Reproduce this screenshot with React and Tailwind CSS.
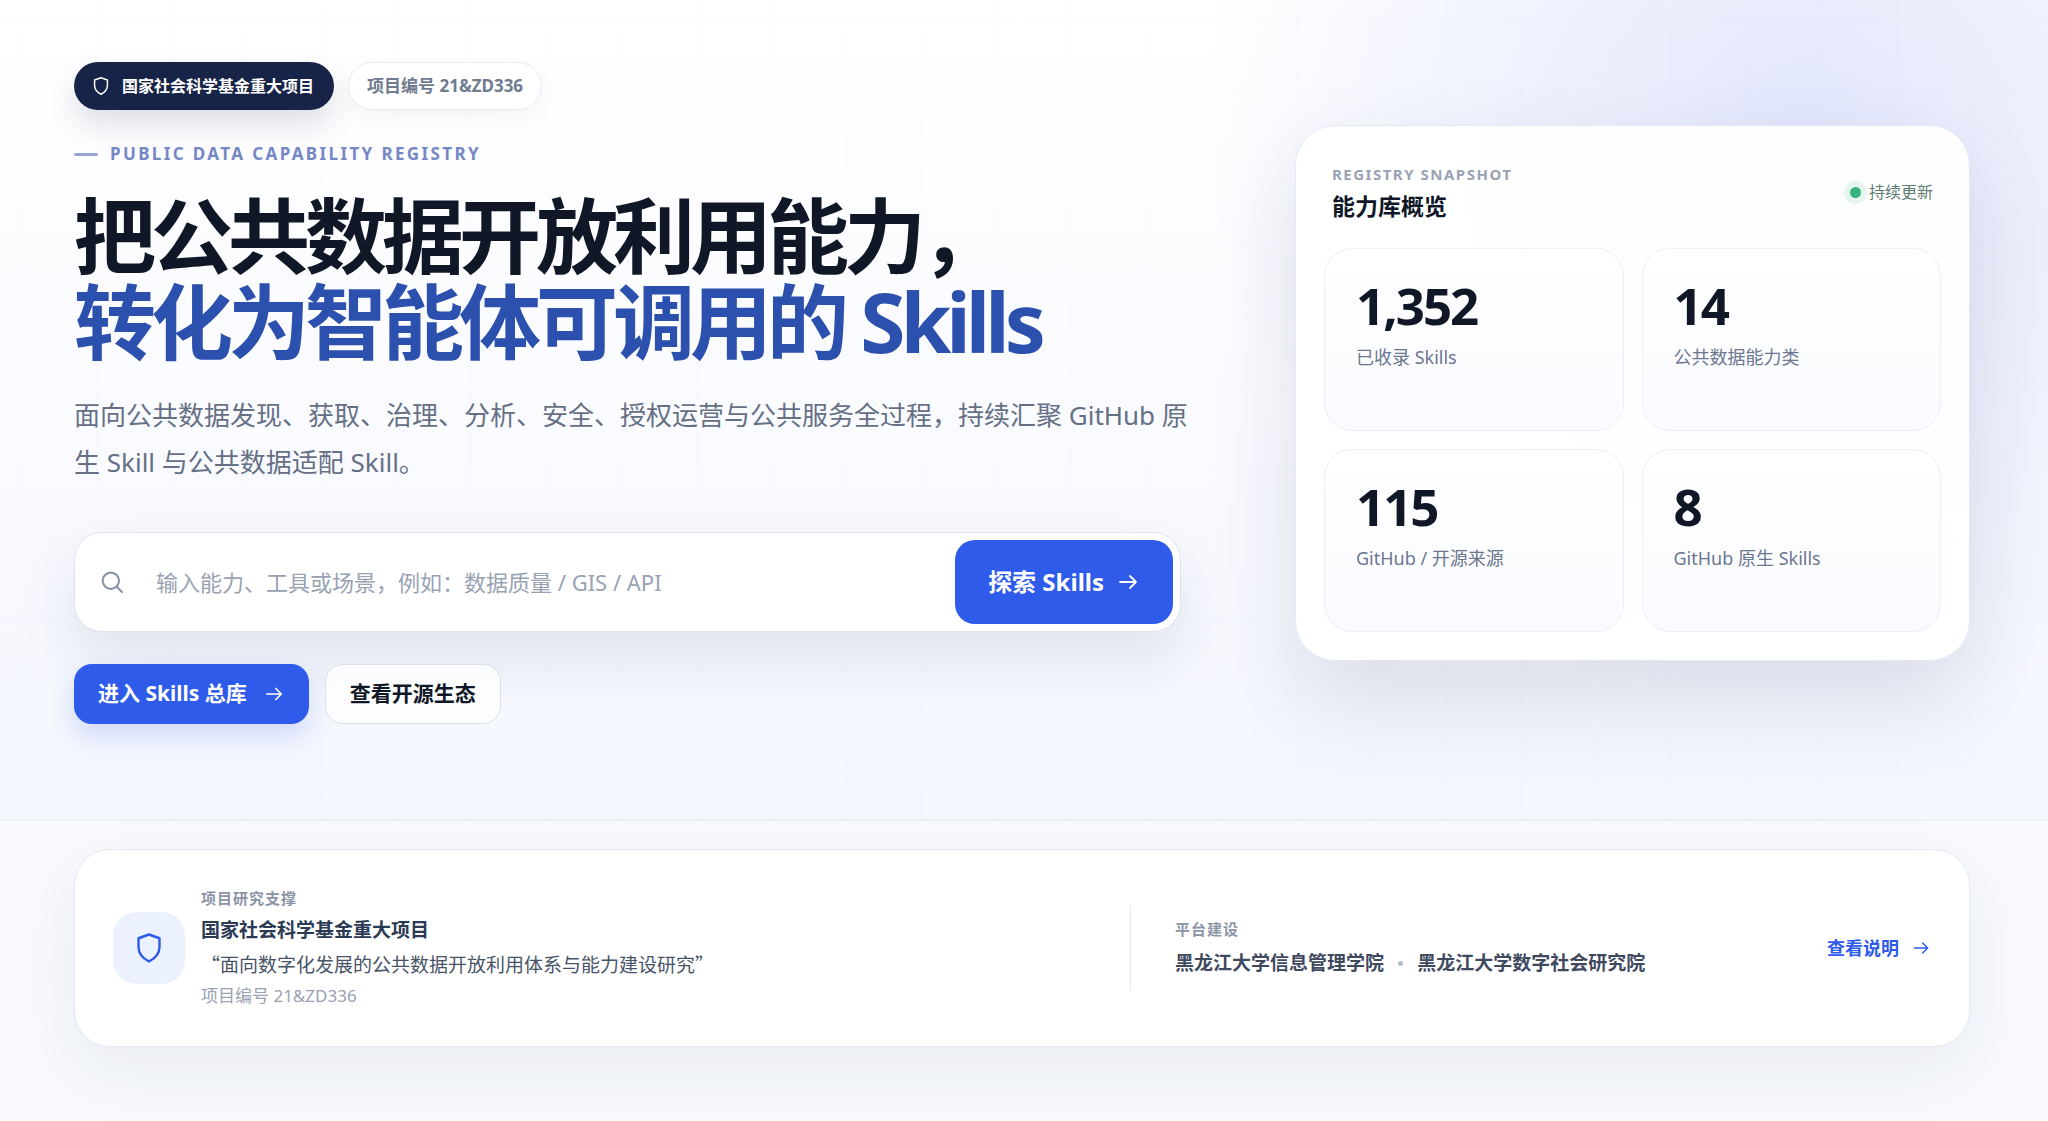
import React, { useState } from 'react';

const stats = [
  { value: '1,352', label: '已收录 Skills' },
  { value: '14', label: '公共数据能力类' },
  { value: '115', label: 'GitHub / 开源来源' },
  { value: '8', label: 'GitHub 原生 Skills' },
];

const ShieldIcon = ({ className }) => (
  <svg viewBox="0 0 24 24" fill="none" stroke="currentColor" strokeWidth="1.6" strokeLinecap="round" strokeLinejoin="round" className={className} aria-hidden="true">
    <path d="M12 3 19 5.5v5.7c0 4.6-2.8 7.7-7 9.8-4.2-2.1-7-5.2-7-9.8V5.5L12 3Z" />
  </svg>
);

const ArrowIcon = ({ className }) => (
  <svg viewBox="0 0 24 24" fill="none" stroke="currentColor" strokeWidth="1.8" strokeLinecap="round" strokeLinejoin="round" className={className} aria-hidden="true">
    <path d="M4 12h16M14 6l6 6-6 6" />
  </svg>
);

const SearchIcon = ({ className }) => (
  <svg viewBox="0 0 24 24" fill="none" stroke="currentColor" strokeWidth="1.8" strokeLinecap="round" className={className} aria-hidden="true">
    <circle cx="11" cy="11" r="7" />
    <path d="m16.5 16.5 4 4" />
  </svg>
);

const Hero = () => {
  const [query, setQuery] = useState('');

  return (
    <section className="border-b border-[#e6eaf2] bg-[linear-gradient(rgba(60,90,170,0.012)_1px,transparent_1px),linear-gradient(90deg,rgba(60,90,170,0.012)_1px,transparent_1px),radial-gradient(circle_at_88%_14%,rgba(79,110,230,0.16),transparent_31%),linear-gradient(180deg,#ffffff_0%,#fafbff_50%,#f3f6fd_100%)] bg-[size:75px_75px,75px_75px,auto,auto] bg-[position:21px_16px,21px_16px,0_0,0_0] pt-[62px] pr-[78px] pb-24 pl-[74px]">
      <div className="grid grid-cols-[minmax(0,1.64fr)_minmax(0,1fr)] items-center gap-[114px]">
        <div>
          <div className="flex items-center gap-[14px]">
            <span className="flex h-12 items-center gap-[10px] rounded-full bg-[#172447] pr-5 pl-4 text-base font-bold text-white shadow-[0_14px_30px_rgba(23,36,71,0.14)]">
              <ShieldIcon className="size-[22px]" />
              国家社会科学基金重大项目
            </span>
            <span className="flex h-12 items-center rounded-full border border-[#e6eaf5] bg-white px-[18px] text-[17px] font-bold text-[#6f7b90] shadow-[0_8px_20px_rgba(23,36,71,0.04)]">
              项目编号 21&amp;ZD336
            </span>
          </div>

          <div className="mt-8 flex items-center gap-3 text-[17px] leading-6 font-bold tracking-[0.14em] text-[#7587c5]">
            <span className="h-[3px] w-6 rounded-full bg-[#95a5d6]"></span>
            PUBLIC DATA CAPABILITY REGISTRY
          </div>

          <h1 className="mt-[26px] text-[82px] leading-[86px] font-bold tracking-[-5px] text-[#101828]">
            把公共数据开放利用能力，
            <span className="block text-[#2c50ae]">转化为智能体可调用的 Skills</span>
          </h1>

          <p className="-mr-4 mt-7 text-[26px] leading-[47px] text-[#667085]">
            面向公共数据发现、获取、治理、分析、安全、授权运营与公共服务全过程，持续汇聚 GitHub 原生 Skill 与公共数据适配 Skill。
          </p>

          <form
            onSubmit={(e) => e.preventDefault()}
            className="mt-[46px] flex items-center rounded-[28px] border border-[#dde4f0] bg-white p-[7px] shadow-[0_26px_60px_rgba(23,36,71,0.10)]"
          >
            <label htmlFor="skill-search" aria-label="搜索 Skills" className="pl-4 text-[#8a94a6]">
              <SearchIcon className="size-7" />
            </label>
            <input
              id="skill-search"
              type="text"
              value={query}
              onChange={(e) => setQuery(e.target.value)}
              placeholder="输入能力、工具或场景，例如：数据质量 / GIS / API"
              className="min-w-0 flex-1 bg-transparent px-[30px] text-[22px] text-[#101828] outline-none placeholder:text-[#98a2b3]"
            />
            <button type="submit" className="flex h-[84px] items-center gap-3 rounded-[20px] bg-[#2e5bea] px-[33px] text-2xl font-bold text-white">
              探索 Skills
              <ArrowIcon className="size-6" />
            </button>
          </form>

          <div className="mt-8 flex gap-4">
            <a href="#skills" className="flex h-[60px] items-center gap-4 rounded-[18px] bg-[#2e5bea] px-6 text-[21px] font-bold text-white shadow-[0_12px_26px_rgba(46,91,234,0.18)]">
              进入 Skills 总库
              <ArrowIcon className="size-[22px]" />
            </a>
            <a href="#ecosystem" className="flex h-[60px] items-center rounded-[18px] border border-[#d9e0ec] bg-white/80 px-6 text-[21px] font-bold text-[#101828]">
              查看开源生态
            </a>
          </div>
        </div>

        <aside className="rounded-[40px] border border-[#e3e9f8] bg-white/92 p-7 shadow-[0_40px_90px_rgba(23,36,71,0.12)]">
          <div className="flex items-center justify-between px-2 pt-2 pb-[26px]">
            <div>
              <div className="text-[15px] leading-6 font-bold tracking-widest text-[#98a2b3]">REGISTRY SNAPSHOT</div>
              <h2 className="mt-1 text-[23px] leading-8 font-bold text-[#101828]">能力库概览</h2>
            </div>
            <div className="flex items-center gap-2 text-base text-[#5d7c70]">
              <span className="size-[11px] rounded-full bg-[#37b27c] ring-6 ring-[#e6f6ee]"></span>
              持续更新
            </div>
          </div>
          <div className="grid grid-cols-2 gap-[18px]">
            {stats.map((item) => (
              <div key={item.label} className="h-[183px] rounded-[28px] border border-[#ebeff7] bg-linear-to-b from-white to-[#fafbff] px-[31px] pt-[26px]">
                <div className="text-[51px] leading-[60px] font-bold tracking-[-2px] text-[#101828]">{item.value}</div>
                <div className="mt-2 text-lg leading-7 text-[#6b7690]">{item.label}</div>
              </div>
            ))}
          </div>
        </aside>
      </div>
    </section>
  );
};

const Support = () => (
  <section className="pt-7 pr-[78px] pb-[74px] pl-[74px]">
    <div className="grid grid-cols-[minmax(0,1.27fr)_minmax(0,1fr)] items-center rounded-[36px] border border-[#e3eaf4] bg-white px-[38px] py-9 shadow-[0_24px_70px_rgba(23,36,71,0.07)]">
      <div className="flex items-center gap-4">
        <div className="flex size-[72px] items-center justify-center rounded-[24px] bg-[#ebf1ff] text-[#2e5bea]">
          <ShieldIcon className="size-9" />
        </div>
        <div>
          <div className="text-[15px] leading-6 font-bold tracking-[1px] text-[#8a94a6]">项目研究支撑</div>
          <div className="mt-1 text-[19px] leading-8 font-bold text-[#2b3a55]">国家社会科学基金重大项目</div>
          <div className="mt-[2px] font-['Noto_Sans_CJK_SC',sans-serif] text-[19px] leading-8 text-[#475467]">“面向数字化发展的公共数据开放利用体系与能力建设研究”</div>
          <div className="mt-[2px] text-[17px] leading-7 text-[#98a2b3]">项目编号 21&amp;ZD336</div>
        </div>
      </div>
      <div className="flex h-[84px] items-center justify-between border-l border-[#e4e8f0] pl-11">
        <div>
          <div className="text-[15px] leading-6 font-bold tracking-[1px] text-[#8a94a6]">平台建设</div>
          <div className="mt-[6px] flex items-center gap-[14px] text-[19px] leading-8 font-bold text-[#3f4a5f]">
            黑龙江大学信息管理学院
            <span className="size-[5px] rounded-full bg-[#b4bdcc]"></span>
            黑龙江大学数字社会研究院
          </div>
        </div>
        <a href="#about" className="flex items-center gap-3 text-lg font-bold text-[#2e5bea]">
          查看说明
          <ArrowIcon className="size-5" />
        </a>
      </div>
    </div>
  </section>
);

const App = () => (
  <main className="min-h-screen bg-[#f8fafe] font-['Noto_Sans','Noto_Sans_CJK_SC',sans-serif]">
    <Hero />
    <Support />
  </main>
);

export default App;
